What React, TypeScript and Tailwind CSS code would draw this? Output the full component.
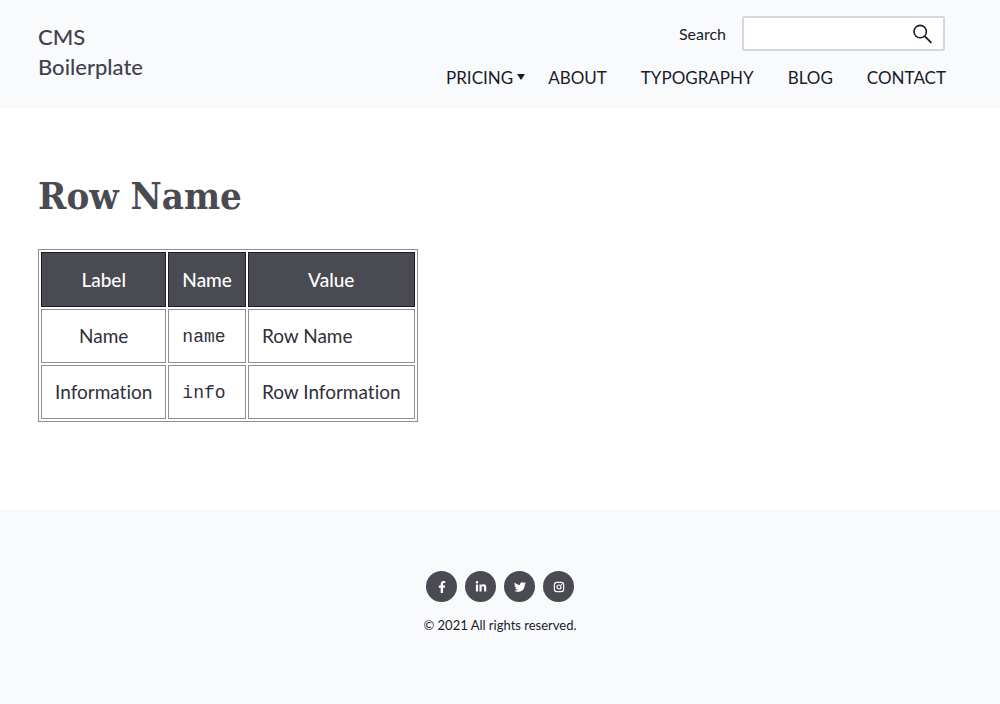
import React from "react";
import { FaFacebookF, FaLinkedinIn, FaTwitter } from "react-icons/fa";

const links = ["ABOUT", "TYPOGRAPHY", "BLOG", "CONTACT"];

const rows = [
  { label: "Name", name: "name", value: "Row Name" },
  { label: "Information", name: "info", value: "Row Information" },
];

function InstagramIcon({ className }: { className?: string }) {
  return (
    <svg viewBox="0 0 12 12" className={className} fill="none" stroke="currentColor" strokeWidth="1.2">
      <rect x="1.4" y="1.4" width="9.2" height="9.2" rx="2.4" />
      <circle cx="6" cy="6" r="2" />
      <circle cx="8.6" cy="3.4" r="0.6" fill="currentColor" stroke="none" />
    </svg>
  );
}

const socials = [
  { label: "Facebook", Icon: FaFacebookF },
  { label: "LinkedIn", Icon: FaLinkedinIn },
  { label: "Twitter", Icon: FaTwitter },
  { label: "Instagram", Icon: InstagramIcon },
];

function Header() {
  return (
    <header className="flex items-start justify-between bg-[#f9fafc] pt-4 pr-[54px] pb-4 pl-[38px]">
      <a href="#" className="mt-1.5 w-32 text-[22px] leading-[30px] font-medium text-[#42424d]">
        CMS Boilerplate
      </a>
      <div className="flex flex-col items-end">
        <form className="mr-px flex items-center gap-4" onSubmit={(e) => e.preventDefault()}>
          <label htmlFor="search" className="text-base">
            Search
          </label>
          <div className="relative">
            <input
              id="search"
              type="text"
              className="block h-[35px] w-[203px] rounded-xs border-2 border-[#d3d7e0] bg-white pr-10 pl-2 text-base outline-none"
            />
            <button type="submit" aria-label="Search" className="absolute top-2 right-3">
              <svg viewBox="0 0 20 20" className="size-5" fill="none" stroke="#1a1a2a" strokeWidth="1.6">
                <circle cx="7.2" cy="7.6" r="6.2" />
                <path d="M11.7 12.1L18.4 18.8" strokeWidth="1.9" />
              </svg>
            </button>
          </div>
        </form>
        <nav className="mt-[13px] flex items-center text-[17px] leading-7">
          <a href="#" className="mr-[23px] flex items-center gap-1">
            PRICING
            <svg viewBox="0 0 8 6" className="mb-0.5 h-1.5 w-2" fill="#1a1a2a">
              <path d="M0 0H8L4 6Z" />
            </svg>
          </a>
          <div className="flex gap-[34px]">
            {links.map((link) => (
              <a key={link} href="#">
                {link}
              </a>
            ))}
          </div>
        </nav>
      </div>
    </header>
  );
}

function FieldTable() {
  return (
    <table className="mt-7 border-separate border-spacing-0.5 border border-[#8f8f8f] text-[19px] leading-[26px] text-[#30303c] [font-variant-ligatures:none]">
      <thead>
        <tr className="bg-[#4a4a53] text-white">
          {["Label", "Name", "Value"].map((heading) => (
            <th key={heading} scope="col" className="h-[55px] border border-[#1b1b2b] px-[13px] font-medium">
              {heading}
            </th>
          ))}
        </tr>
      </thead>
      <tbody>
        {rows.map((row) => (
          <tr key={row.name}>
            <td className="h-[54px] border border-[#8f8f8f] px-[13px] text-center">{row.label}</td>
            <td className="border border-[#8f8f8f] px-[13px]">
              <code className="font-['Liberation_Mono',monospace] text-lg">{row.name}</code>
            </td>
            <td className="border border-[#8f8f8f] px-[13px]">{row.value}</td>
          </tr>
        ))}
      </tbody>
    </table>
  );
}

function Footer() {
  return (
    <footer className="flex grow flex-col items-center bg-[#f9fafc] pt-[62px] pb-16">
      <div className="flex gap-2">
        {socials.map(({ label, Icon }) => (
          <a
            key={label}
            href="#"
            aria-label={label}
            className="flex size-[31px] items-center justify-center rounded-full bg-[#4a4a53] text-white"
          >
            <Icon className="size-3" />
          </a>
        ))}
      </div>
      <p className="mt-[13px] text-[13px] leading-5">© 2021 All rights reserved.</p>
    </footer>
  );
}

export default function App() {
  return (
    <div className="flex min-h-screen flex-col bg-white font-['Lato',sans-serif] text-[#1a1a2a]">
      <Header />
      <main className="px-[38px] pt-[63px] pb-[87px]">
        <h1 className="font-['DejaVu_Serif_Condensed','DejaVu_Serif',serif] text-[38px] leading-[50px] font-bold text-[#4a4a53]">
          Row Name
        </h1>
        <FieldTable />
      </main>
      <Footer />
    </div>
  );
}
